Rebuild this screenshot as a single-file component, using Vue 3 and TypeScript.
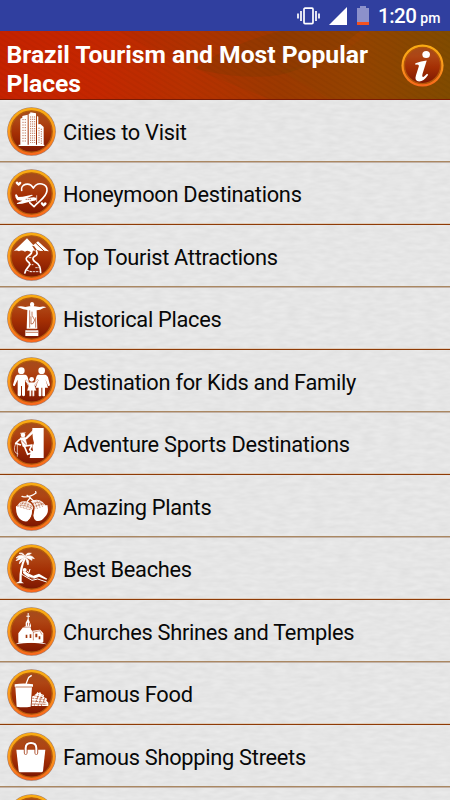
<script setup lang="ts">
interface Place {
  icon: string
  label: string
}

const places: Place[] = [
  { icon: 'city', label: 'Cities to Visit' },
  { icon: 'heart', label: 'Honeymoon Destinations' },
  { icon: 'mountain', label: 'Top Tourist Attractions' },
  { icon: 'statue', label: 'Historical Places' },
  { icon: 'family', label: 'Destination for Kids and Family' },
  { icon: 'climb', label: 'Adventure Sports Destinations' },
  { icon: 'plant', label: 'Amazing Plants' },
  { icon: 'beach', label: 'Best Beaches' },
  { icon: 'church', label: 'Churches Shrines and Temples' },
  { icon: 'food', label: 'Famous Food' },
  { icon: 'bag', label: 'Famous Shopping Streets' },
  { icon: 'more', label: '' },
]
</script>

<template>
  <div class="screen">
    <svg class="defs" width="0" height="0" aria-hidden="true">
      <defs>
        <linearGradient id="ring" x1="0" y1="0" x2="0" y2="1">
          <stop offset="0" stop-color="#f9ac12" />
          <stop offset=".5" stop-color="#fb9a1c" />
          <stop offset="1" stop-color="#f8651b" />
        </linearGradient>
        <linearGradient id="disc" x1="0" y1="0" x2="0" y2="1">
          <stop offset="0" stop-color="#a54c1c" />
          <stop offset=".25" stop-color="#ae4514" />
          <stop offset=".55" stop-color="#a42f04" />
          <stop offset="1" stop-color="#7c1702" />
        </linearGradient>
      </defs>
    </svg>

    <div class="status">
      <svg class="vibrate" viewBox="0 0 23 18">
        <rect x="7" y="1.2" width="9" height="15.4" rx="1" />
        <path d="M4 4v10M1 6.5v5M19 4v10M22 6.5v5" />
      </svg>
      <svg class="signal" viewBox="0 0 18 18"><path d="M0 18 18 0v18z" fill="#fff" /></svg>
      <svg class="battery" viewBox="0 0 12 19">
        <path d="M3 0h6v2h3v17H0V2h3z" fill="#8c91cb" />
        <path d="M0 16h12v3H0z" fill="#f4511e" />
      </svg>
      <span class="clock">1:20</span><span class="pm">pm</span>
    </div>

    <header class="header">
      <svg class="waves" viewBox="0 0 450 69" preserveAspectRatio="none">
        <defs>
          <pattern id="lines" width="5" height="5" patternUnits="userSpaceOnUse" patternTransform="rotate(32)">
            <path d="M0 1h5" stroke="#000" stroke-opacity=".05" stroke-width="1" />
          </pattern>
        </defs>
        <path d="M0 0h118Q180 35 270 69H0z" fill="#e03000" opacity=".14" />
        <path d="M195 38Q225 15 280 0h80Q310 42 270 46 230 48 195 38z" fill="#5c3b00" opacity=".18" />
        <path d="M280 40Q340 30 370 0h80v69H330z" fill="#6b5200" opacity=".1" />
        <rect width="450" height="69" fill="url(#lines)" />
      </svg>
      <h1>Brazil Tourism and Most Popular Places</h1>
      <svg class="info" viewBox="0 0 147 147">
        <circle cx="73.5" cy="73.5" r="72" fill="url(#ring)" />
        <circle cx="73.5" cy="73.5" r="62" fill="url(#disc)" stroke="#b35508" stroke-width="5" />
        <g fill="#fff">
          <ellipse cx="86" cy="36" rx="13" ry="12" />
          <path d="M49 66q20-9 39-10L74 101q-4 14 4 11l11-10 4 3q-15 23-31 23-17-1-11-20l10-32q2-8-12-5z" />
        </g>
      </svg>
    </header>

    <main class="list">
      <svg class="paper" aria-hidden="true">
        <filter id="grain" x="0" y="0" width="100%" height="100%" color-interpolation-filters="sRGB">
          <feTurbulence type="fractalNoise" baseFrequency=".08 .24" numOctaves="2" seed="5" />
          <feColorMatrix values=".055 0 0 0 .873  .055 0 0 0 .873  .055 0 0 0 .873  0 0 0 0 1" />
        </filter>
        <rect width="100%" height="100%" filter="url(#grain)" />
      </svg>
      <div class="rows">
        <div v-for="place in places" :key="place.icon" class="row">
          <svg class="icon" viewBox="0 0 147 147">
            <circle cx="73.5" cy="73.5" r="73" fill="#8c5a48" opacity=".75" />
            <circle cx="73.5" cy="73.5" r="71.5" fill="url(#ring)" />
            <circle cx="73.5" cy="73.5" r="62" fill="url(#disc)" stroke="#b15a0d" stroke-width="4" />

            <g v-if="place.icon === 'city'" fill="#fff">
              <path d="M35 113h77v4H35zM40 35l6-3V27l16-4v91H40zM65 21l5-2v-3l17 3v95H65zM90 52V27l4 2v23l6-1 10 9v54H90z" />
              <path d="M46 38h13M46 46h13M46 54h13M46 62h13M46 70h13M46 78h13M46 86h13M46 94h13M46 102h13M71 28v80M77 28v80M83 28v80M96 62v49M103 65v46" fill="none" stroke="#a53a10" stroke-width="2" stroke-dasharray="4 3" />
            </g>

            <g v-else-if="place.icon === 'heart'" fill="none" stroke="#fff" stroke-width="5" stroke-linecap="round" stroke-linejoin="round">
              <path d="M44 64C40 47 66 36 79 57 91 36 122 43 120 65 118 87 93 97 81 113L68 101" />
              <path d="M24 77l5-1 5 8 13-1 28-6 3 2-17 8 19-2q9 1 9 5-2 6-12 6l-32 8-14 1-2-2 17-8-15-1-5-8z" fill="#fff" stroke="none" />
              <path d="M89 80v18" stroke-width="2" />
              <path d="M57 91h17" stroke="#9c310c" stroke-width="2" stroke-dasharray="2 4" />
              <path d="M35 51q-14-10-7-13 5-1 7 4 3-6 7-3 4 4-7 12zM110 113q-13-9-7-13 5-1 7 4 3-6 8-3 4 4-8 12z" fill="#fff" stroke="none" />
            </g>

            <g v-else-if="place.icon === 'mountain'" fill="none" stroke="#fff" stroke-width="4">
              <path d="M20 58 60 19l14 15 8 9-7-2 10 15q-9-3-13 5-9-8-18-2-11-7-18-1-8-5-16 0zM79 39l14-11 33 30-15-2-10 1-11-3-11-15z" fill="#fff" stroke="none" />
              <path d="M82 29 112 58" stroke="#a2400f" stroke-width="3" />
              <path d="M74 52q4 12-10 20-13 8 0 18 9 6-2 17-7 8-9 18M87 55q8 12-4 18-12 7 3 18 15 7 15 33" stroke-width="5" />
              <path d="M65 77h10M66 98h13M68 119h29M85 107h11M60 115l13 4" stroke-width="2.5" stroke-dasharray="7 2" />
            </g>

            <g v-else-if="place.icon === 'statue'" fill="#fff">
              <path d="M69 33v-4q1-5 6-5t7 6l-2 10h-9z" />
              <path d="M30 39q10-4 25 0l12-2h16l15 2q12-3 20 1l-10 3q-8 6-19 6l2 55H59l2-56q-14-1-20-5zM55 109h39v17H55z" />
              <path d="M68 49v52M75 53v11l8 14q-4 15-11 12V67M86 70v31M60 107h28M56 115h37" fill="none" stroke="#a73d10" stroke-width="2" />
            </g>

            <g v-else-if="place.icon === 'family'" fill="#fff">
              <circle cx="43" cy="41" r="10" /><circle cx="104" cy="41" r="10" /><circle cx="74" cy="67" r="7" />
              <path d="M31 53h24q7 2 9 15l4 16-4 4-10-20v47q-4 6-9 0V87h-3v28q-4 6-10 0V68l-9 19q-5 1-5-4l7-23q1-5 6-7zM93 53h22q6 2 8 8l6 23q-2 5-6 2l-8-20 8 26h-9v24q-4 4-8 0V92h-3v24q-5 4-8 0V92h-9l9-25-9 20q-5 0-5-4l5-16q3-13 7-14z" />
              <path d="M66 76h16l9-9 3 4-11 13 5 17h-6v16q-4 2-6 0v-16h-3v16q-4 2-6 0v-16h-7l5-17-11-12 3-4z" stroke="#a23710" stroke-width="1" />
            </g>

            <g v-else-if="place.icon === 'climb'" fill="none" stroke="#fff" stroke-width="6" stroke-linejoin="round">
              <path d="M76 40V27h34v90H68l3-18 7-4-2-12 5-11-3-12z" fill="#fff" stroke="none" />
              <circle cx="48" cy="48" r="7" fill="#fff" stroke="none" />
              <path d="M39 59 58 58 82 35" />
              <path d="M40 57 54 56l6 23-12 4z" fill="#fff" stroke-width="2" />
              <path d="M39 60 26 73l16 5" stroke-width="5" />
              <path d="M49 82 75 78l-7 14 11 11M53 84l9 22 13-5" stroke-width="5" />
              <path d="M26 73q-11 28 8 32M31 78v35M56 57l25-27M39 43l17-2" stroke-width="2" />
              <path d="M45 64l12 13" stroke="#a23a12" stroke-width="2" />
            </g>

            <g v-else-if="place.icon === 'plant'" fill="#fff">
              <path d="M27 72 60 82l15 1q2 22-14 35-20 3-30-18-5-14-4-28zM83 79l38-10q6 24-7 35-11 16-27 12-7-5-8-15z" />
              <path d="M30 73Q38 55 55 58q20 3 24 19l-3 8-21-5zM76 56q17-7 31 4l11 13-34 13q-1-19-13-28z" opacity=".92" />
              <path d="M34 70q21-2 41 10M40 64q20-2 36 11M49 60l-9 14M57 61l-8 16M65 65l-7 15M73 71l-5 12M78 65q14-9 33 3M82 73l32-9M84 80l-8-14M91 80l-7-20M99 77 90 56M107 74 98 58" fill="none" stroke="#a94216" stroke-width="2" stroke-dasharray="3 2" />
              <path d="M78 84q1 20-14 33" fill="none" stroke="#a13409" stroke-width="2.5" />
              <path d="M45 43q20 6 42-10l-1-4M60 40l10 8 10 9M70 47l-9 11" fill="none" stroke="#fff" stroke-width="4" stroke-linecap="round" />
            </g>

            <g v-else-if="place.icon === 'beach'" fill="#fff">
              <path d="M52 41Q36 67 37 112l-11 6h25l-7-5Q42 75 57 42z" />
              <path d="M55 39Q39 27 27 42l9-2-9 10Q43 45 55 39zM54 37Q48 23 36 28l8 2zM55 38q2-14 18-10l-7 4q-7 0-11 6zM55 39q18-9 27 5l-8-2 1 7zM55 41q14 6 8 22l-3-7zM53 41q-15 5-16 18l7-6z" stroke="#fff" stroke-width="2" />
              <circle cx="53" cy="78" r="6" />
              <path d="M48 83q8-1 14 4l17 8 17-6 25 15-3 3-22-9-15 6Q61 102 48 87z" />
              <path d="M43 82q-3 10 6 12l26 15 17-4 27 9M60 81l6 5 3-11" fill="none" stroke="#fff" stroke-width="3" />
              <path d="M67 99l7 3 6 1" fill="none" stroke="#9c300a" stroke-width="2" />
            </g>

            <g v-else-if="place.icon === 'church'" fill="#fff">
              <path d="M62 18h3v8h4v3h-4v8l7 18v12l4 4 23-3 10 11v25l-3 3H34V79l14-18 8-3V47l6-11v-7h-4v-3h4z" />
              <path d="M25 112Q40 103 66 103q30-1 54 9-29-5-47-5-24 0-48 5z" />
              <path d="M60 47v9h2v-9zm6 0v9h2v-9zM56 83v10h5V83zm12-1v11h5V82zm17-2v11h6V80zm10 8v9h5v-9z" fill="#a23409" />
              <path d="M48 61l22-1 9 16v24M78 76l20-5 7 12" fill="none" stroke="#a23409" stroke-width="1.5" />
            </g>

            <g v-else-if="place.icon === 'food'" fill="#fff">
              <path d="M23 46q27-5 55 0v7h-3l-4 60q-22 4-42 0l-4-60h-2z" />
              <path d="M57 45 65 25l9-6" fill="none" stroke="#fff" stroke-width="4" />
              <path d="M26 54h49" stroke="#a83b0c" stroke-width="2" />
              <path d="M75 83l13-9 3-5 5 4 3-5 4 7 8 3-1 6 10 5-2 6 6 6v10H74z" />
              <path d="M78 79l32 8M74 87l42 6M75 96l43 4M75 105l45 1M82 110l13-34M93 111l13-33M103 111l11-25" fill="none" stroke="#a4350b" stroke-width="2" stroke-dasharray="8 3" />
            </g>

            <g v-else-if="place.icon === 'bag'">
              <path d="M28 53h87l-7 64q-1 4-5 4H40q-4 0-5-4z" fill="#fff" />
              <path d="M56 63V49q0-15 16-15t16 15v14" fill="none" stroke="#a13911" stroke-width="11" stroke-linecap="round" />
              <path d="M56 64V49q0-16 16-16t16 16v15" fill="none" stroke="#fff" stroke-width="6" stroke-linecap="round" />
            </g>
          </svg>
          <span class="label">{{ place.label }}</span>
        </div>
      </div>
    </main>
  </div>
</template>

<style>
body {
  margin: 0;
  overflow: hidden;
}
</style>

<style scoped>
.screen {
  width: 450px;
  height: 800px;
  overflow: hidden;
  display: flex;
  flex-direction: column;
  font-family: Roboto, sans-serif;
  background: #e5e5e5;
}
.defs {
  position: absolute;
}
.status {
  height: 31px;
  flex: none;
  display: flex;
  align-items: flex-start;
  background: #303f9f;
  color: #fff;
  box-sizing: border-box;
  padding-left: 297px;
}
.vibrate {
  width: 23px;
  height: 18px;
  margin-top: 6.5px;
  fill: none;
  stroke: #fff;
  stroke-width: 1.7;
}
.signal {
  width: 18px;
  height: 18px;
  margin: 7px 0 0 9px;
}
.battery {
  width: 12px;
  height: 19px;
  margin: 6px 0 0 10px;
}
.clock {
  font-size: 20.5px;
  line-height: 33px;
  font-weight: 500;
  letter-spacing: -0.5px;
  margin-left: 9px;
}
.pm {
  font-size: 14px;
  line-height: 37px;
  font-weight: 500;
  margin-left: 4px;
}
.header {
  height: 69px;
  flex: none;
  display: grid;
  grid-template-columns: 400.5px 1fr;
  background: linear-gradient(90deg, #c12000 0%, #bf2600 22%, #ae3200 43%, #9c3900 62%, #994200 80%, #834b00 100%);
  border-bottom: 1px solid #7a1b05;
  box-sizing: border-box;
}
.waves,
h1,
.info {
  grid-row: 1;
}
.waves {
  grid-column: 1 / 3;
  width: 450px;
  height: 68px;
}
h1 {
  grid-column: 1;
  margin: 0;
  padding: 9px 20px 0 6.5px;
  color: #fff;
  font-size: 24.7px;
  line-height: 29px;
  font-weight: 700;
}
.info {
  grid-column: 2;
  width: 43px;
  height: 43px;
  margin-top: 13px;
}
.list {
  flex: none;
  display: grid;
  grid-template: 700px / 450px;
  overflow: hidden;
}
.paper,
.rows {
  grid-area: 1 / 1;
  width: 450px;
}
.paper {
  height: 700px;
}
.rows {
  display: grid;
  grid-auto-rows: 62px 63px;
}
.row {
  display: flex;
  align-items: flex-start;
  box-sizing: border-box;
  padding: 7px 0 0 7px;
}
.row:nth-child(odd) {
  border-bottom: 1px solid #aa8862;
}
.row:nth-child(even) {
  padding-top: 6px;
  border-top: 1px solid #c3b3a8;
  border-bottom: 1px solid #8e3b07;
  box-shadow: inset 0 -1px #e0cebd;
}
.icon {
  width: 49px;
  height: 49px;
  flex: none;
}
.label {
  margin-left: 7px;
  font-size: 21.8px;
  line-height: 51px;
  letter-spacing: -0.28px;
  color: #080808;
  white-space: nowrap;
}
</style>
